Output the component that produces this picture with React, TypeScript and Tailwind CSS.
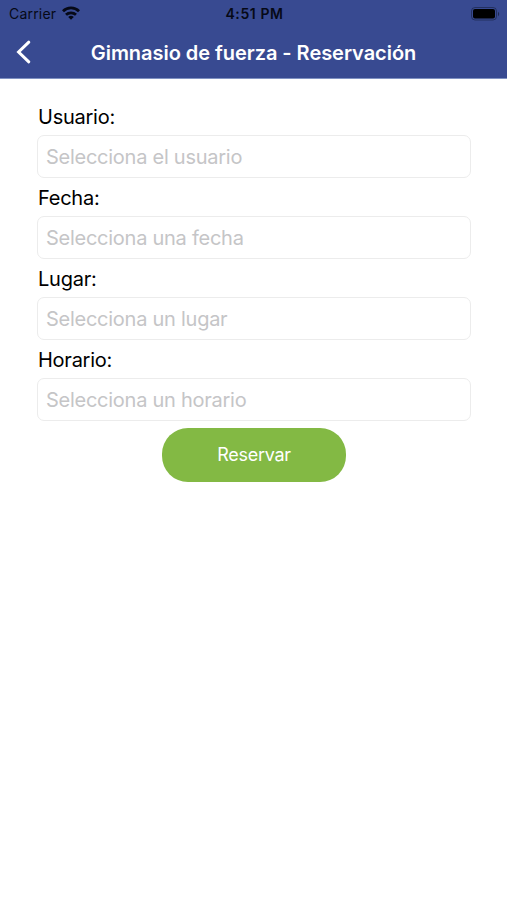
import React from 'react';

const fields = [
  { label: "Usuario:", placeholder: "Selecciona el usuario" },
  { label: "Fecha:", placeholder: "Selecciona una fecha" },
  { label: "Lugar:", placeholder: "Selecciona un lugar" },
  { label: "Horario:", placeholder: "Selecciona un horario" }
];

const StatusBar: React.FC = () => (
  <div className="grid grid-cols-3 items-center h-[27px] pl-[9px] pr-[7px] text-[#060916]">
    <div className="flex items-center gap-[6px]">
      <span className="text-[14px] tracking-[0.2px]">Carrier</span>
      <svg className="-mt-[2px]" width="18" height="14" viewBox="0 0 18 14" fill="none" stroke="currentColor" strokeWidth="2.8">
        <path d="M1 5.2a11.4 11.4 0 0 1 16 0" />
        <path d="M4 8.8a7.2 7.2 0 0 1 10 0" />
        <path d="M9 13.8 6.2 11a4 4 0 0 1 5.6 0z" fill="currentColor" stroke="none" />
      </svg>
    </div>
    <span className="text-center text-[14px] font-semibold whitespace-nowrap tracking-[0.6px]">4:51 PM</span>
    <svg className="justify-self-end" width="29" height="14" viewBox="0 0 29 14">
      <rect x="0.5" y="0.5" width="25" height="12.5" rx="3.5" fill="none" stroke="currentColor" strokeOpacity="0.4" />
      <rect x="2" y="2" width="22" height="9.5" rx="2" fill="#000" />
      <path d="M27 4.8c1.6.7 1.6 3.7 0 4.4z" fill="currentColor" fillOpacity="0.5" />
    </svg>
  </div>
);

const App: React.FC = () => {
  return (
    <div className="min-h-screen bg-white font-['Inter',sans-serif]">
      <header className="h-[79px] bg-[#384a91] border-b border-[#7f91c2]">
        <StatusBar />
        <div className="grid grid-cols-[48px_1fr_48px] items-center h-[51px]">
          <button className="pl-[15px] text-white">
            <svg className="-mt-px" width="17" height="24" viewBox="0 0 17 24" fill="none" stroke="currentColor" strokeWidth="3" strokeLinecap="round">
              <path d="M13.8 2.2 3.6 12l10.2 9.8" />
            </svg>
          </button>
          <h1 className="text-center text-[20px] font-semibold text-white whitespace-nowrap tracking-[-0.04px]">
            Gimnasio de fuerza - Reservación
          </h1>
        </div>
      </header>

      <main className="flex flex-col pl-[37px] pr-[36px] pt-[21px]">
        {fields.map((field) => (
          <div key={field.label} className="h-[81px]">
            <label className="flex items-center h-[35px] pl-px pb-[2px] text-[20px] text-black tracking-[-0.25px]">{field.label}</label>
            <div className="flex items-center h-[43px] px-[8px] border border-[#ececec] rounded-[7px] text-[20px] text-[#c5c5c7] tracking-[-0.26px]">
              {field.placeholder}
            </div>
          </div>
        ))}
        <button className="self-center mt-[4px] w-[184px] h-[54px] pb-[2px] rounded-[26px] bg-[#83b944] text-[18px] text-white tracking-[-0.3px]">
          Reservar
        </button>
      </main>
    </div>
  );
};

export default App;
